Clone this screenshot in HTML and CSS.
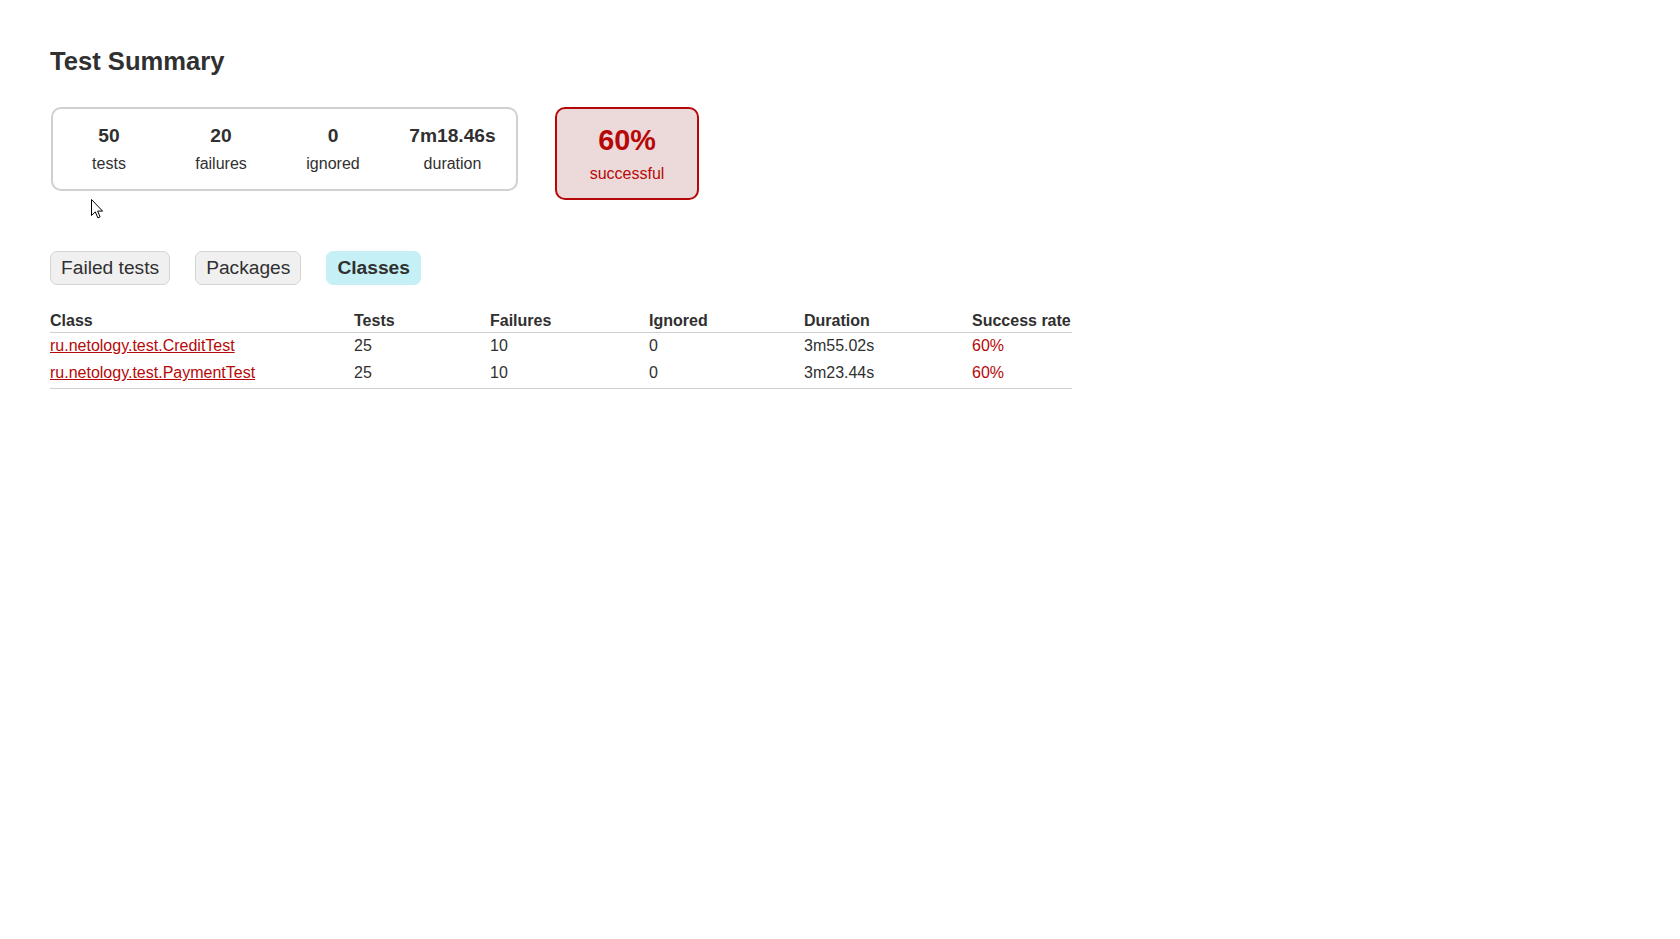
FILE: index.html
```html
<!DOCTYPE html>
<html lang="en">
<head>
<meta charset="utf-8">
<title>Test results - Test Summary</title>
<link rel="stylesheet" href="styles.css">
</head>
<body>
<div class="content">
  <h1 class="title">Test Summary</h1>

  <div class="summary">
    <div class="summary-cell">
      <div class="summary-group">
        <div class="box-cell">
          <div class="info-box">
            <div class="counter">50</div>
            <p class="label">tests</p>
          </div>
        </div>
        <div class="box-cell">
          <div class="info-box">
            <div class="counter">20</div>
            <p class="label">failures</p>
          </div>
        </div>
        <div class="box-cell">
          <div class="info-box">
            <div class="counter">0</div>
            <p class="label">ignored</p>
          </div>
        </div>
        <div class="box-cell">
          <div class="info-box info-box-wide">
            <div class="counter">7m18.46s</div>
            <p class="label">duration</p>
          </div>
        </div>
      </div>
    </div>
    <div class="summary-cell">
      <div class="info-box success-rate">
        <div class="percent">60%</div>
        <p class="label">successful</p>
      </div>
    </div>
  </div>

  <ul class="tab-links">
    <li class="tab"><a class="tab-link" href="#tab0">Failed tests</a></li>
    <li class="tab"><a class="tab-link" href="#tab1">Packages</a></li>
    <li class="tab tab-selected"><a class="tab-link" href="#tab2">Classes</a></li>
  </ul>

  <table class="class-table">
    <colgroup>
      <col class="col-class">
      <col class="col-tests">
      <col class="col-failures">
      <col class="col-ignored">
      <col class="col-duration">
      <col class="col-rate">
    </colgroup>
    <thead>
      <tr>
        <th class="head-cell">Class</th>
        <th class="head-cell">Tests</th>
        <th class="head-cell">Failures</th>
        <th class="head-cell">Ignored</th>
        <th class="head-cell">Duration</th>
        <th class="head-cell">Success rate</th>
      </tr>
    </thead>
    <tbody class="class-body">
      <tr>
        <td class="cell"><a class="fail-link" href="#">ru.netology.test.CreditTest</a></td>
        <td class="cell">25</td>
        <td class="cell">10</td>
        <td class="cell">0</td>
        <td class="cell">3m55.02s</td>
        <td class="cell cell-fail">60%</td>
      </tr>
      <tr>
        <td class="cell"><a class="fail-link" href="#">ru.netology.test.PaymentTest</a></td>
        <td class="cell">25</td>
        <td class="cell">10</td>
        <td class="cell">0</td>
        <td class="cell">3m23.44s</td>
        <td class="cell cell-fail">60%</td>
      </tr>
    </tbody>
  </table>
</div>

<svg class="cursor" width="13" height="20" viewBox="0 0 13 20" aria-hidden="true">
  <path d="M0.5 0.5 L0.5 16.5 L4.3 12.9 L6.9 18.9 L9.1 17.9 L6.6 12.1 L11.6 12.1 Z" fill="#ffffff" stroke="#000000" stroke-width="1" stroke-linejoin="miter"/>
</svg>
</body>
</html>
```

FILE: styles.css
```css
html, body {
  margin: 0;
  padding: 0;
  background: #ffffff;
}

body {
  font-family: "Liberation Sans", Arial, sans-serif;
  font-size: 16px;
  color: #303030;
}

.content {
  padding: 49px 50px 30px 50px;
}

.title {
  margin: 0;
  font-size: 25.6px;
  line-height: 1;
  font-weight: bold;
  color: #303030;
}

.summary {
  display: flex;
  align-items: flex-start;
  margin-top: 31px;
  margin-bottom: 40px;
}

.summary-cell {
  padding: 1px;
}

.summary-group {
  display: flex;
  border: 2px solid #d0d0d0;
  border-radius: 10px;
}

.box-cell {
  padding: 1px;
}

.info-box {
  width: 110px;
  padding-top: 15px;
  padding-bottom: 15px;
  text-align: center;
}

.info-box-wide {
  width: 125px;
}

.counter {
  font-size: 19.2px;
  font-weight: bold;
  margin-bottom: 8px;
}

.label {
  margin: 0;
}

.success-rate {
  width: 140px;
  margin-left: 35px;
  border: 2px solid #b60808;
  border-radius: 10px;
  background-color: #ecdada;
  color: #b60808;
}

.percent {
  font-size: 28.8px;
  font-weight: bold;
  margin-bottom: 8px;
}

.tab-links {
  display: flex;
  margin: 0 0 17px 0;
  padding: 10px 0;
  list-style: none;
}

.tab {
  padding: 5px 10px;
  margin-right: 25px;
  border: 1px solid #d4d4d4;
  border-radius: 7px;
  background-color: #f0f0f0;
}

.tab-link {
  display: block;
  font-size: 19.2px;
  color: #303030;
  text-decoration: none;
}

.tab-selected {
  background-color: #c5f0f5;
  border-color: #c5f0f5;
}

.tab-selected .tab-link {
  font-weight: bold;
}

.class-table {
  border-collapse: collapse;
  table-layout: fixed;
  width: 1022px;
}

.col-class { width: 304px; }
.col-tests { width: 136px; }
.col-failures { width: 159px; }
.col-ignored { width: 155px; }
.col-duration { width: 168px; }
.col-rate { width: 100px; }

.head-cell {
  text-align: left;
  font-weight: bold;
  padding: 0 0 2px 0;
  border-bottom: 1px solid #d0d0d0;
  white-space: nowrap;
}

.class-body {
  border-bottom: 1px solid #d0d0d0;
}

.cell {
  height: 28px;
  box-sizing: border-box;
  padding: 4px 0 0 0;
  vertical-align: top;
  text-align: left;
  white-space: nowrap;
}

.fail-link {
  color: #b60808;
  text-decoration: underline;
}

.cell-fail {
  color: #b60808;
}

.cursor {
  position: absolute;
  left: 91px;
  top: 199px;
}
```
